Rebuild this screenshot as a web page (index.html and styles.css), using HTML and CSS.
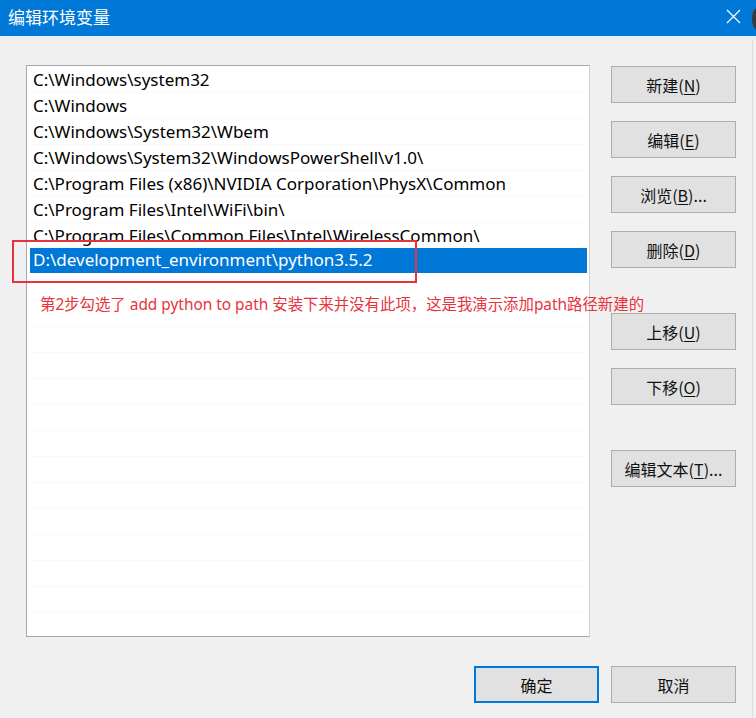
FILE: index.html
```html
<!DOCTYPE html>
<html lang="zh-CN">
<head>
<meta charset="utf-8">
<title>编辑环境变量</title>
<link rel="stylesheet" href="styles.css">
</head>
<body>
<div class="window">
  <div class="titlebar">
    <span class="title">编辑环境变量</span>
    <svg class="close" width="15" height="15" viewBox="0 0 15 15"><path d="M1 1 L14 14 M14 1 L1 14" stroke="#fff" stroke-width="1.2" fill="none"/></svg>
    <span class="edge-dot"></span>
  </div>
  <div class="body">
    <div class="main">
      <div class="list">
        <div class="row">C:\Windows\system32</div>
        <div class="row">C:\Windows</div>
        <div class="row">C:\Windows\System32\Wbem</div>
        <div class="row">C:\Windows\System32\WindowsPowerShell\v1.0\</div>
        <div class="row">C:\Program Files (x86)\NVIDIA Corporation\PhysX\Common</div>
        <div class="row">C:\Program Files\Intel\WiFi\bin\</div>
        <div class="row">C:\Program Files\Common Files\Intel\WirelessCommon\</div>
        <div class="row selected">D:\development_environment\python3.5.2</div>
        <div class="row empty"></div>
        <div class="row empty"></div>
        <div class="row empty"></div>
        <div class="row empty"></div>
        <div class="row empty"></div>
        <div class="row empty"></div>
        <div class="row empty"></div>
        <div class="row empty"></div>
        <div class="row empty"></div>
        <div class="row empty"></div>
        <div class="row empty"></div>
        <div class="row empty"></div>
        <div class="row empty"></div>
        <div class="row empty"></div>
      </div>
      <div class="actions">
        <button class="btn">新建(<u>N</u>)</button>
        <button class="btn">编辑(<u>E</u>)</button>
        <button class="btn">浏览(<u>B</u>)...</button>
        <button class="btn">删除(<u>D</u>)</button>
        <button class="btn group">上移(<u>U</u>)</button>
        <button class="btn">下移(<u>O</u>)</button>
        <button class="btn group">编辑文本(<u>T</u>)...</button>
      </div>
    </div>
    <div class="footer">
      <button class="btn primary">确定</button>
      <button class="btn">取消</button>
    </div>
  </div>
  <div class="annot-box"></div>
  <div class="annot-text">第2步勾选了 add python to path 安装下来并没有此项，这是我演示添加path路径新建的</div>
  <div class="right-edge"></div>
</div>
</body>
</html>
```

FILE: styles.css
```css
* { box-sizing: border-box; }
html, body { margin: 0; padding: 0; }
body {
  width: 756px;
  height: 718px;
  overflow: hidden;
  background: #f0f0f0;
  font-family: "Noto Sans", "Noto Sans CJK SC", sans-serif;
  color: #000;
}
.window {
  position: relative;
  width: 756px;
  height: 718px;
  background: #f0f0f0;
}
.titlebar {
  height: 38px;
  background: #0078d7;
  border-bottom: 2px solid #e6eef8;
  display: flex;
  align-items: center;
  padding-left: 8px;
  position: relative;
}
.title {
  color: #fff;
  font-family: "Noto Sans CJK SC", sans-serif;
  font-size: 17px;
  padding-bottom: 3px;
}
.close {
  margin-left: auto;
  margin-right: 15px;
  margin-bottom: 3px;
}
.edge-dot {
  position: absolute;
  right: -7px;
  top: 8px;
  width: 11px;
  height: 22px;
  border-radius: 50%;
  background: #3a3a3a;
}
.body {
  padding: 27px 20px 0 26px;
}
.main {
  display: flex;
  gap: 21px;
}
.list {
  width: 564px;
  height: 572px;
  background: #fff;
  border: 1px solid #a9a9a9;
  border-right-color: #d0d0d0;
  padding: 1px 2px 0 3px;
  overflow: hidden;
}
.row {
  height: 26px;
  line-height: 26px;
  font-size: 17px;
  padding-left: 3px;
  white-space: nowrap;
  border-bottom: 1px solid #f8f8f8;
}
.row.selected {
  background: #0078d7;
  color: #fff;
  height: 25px;
  line-height: 24px;
  margin-top: -1px;
  margin-bottom: 2px;
  padding-left: 3px;
  border-bottom: none;
}
.actions {
  display: flex;
  flex-direction: column;
  padding-top: 1px;
  gap: 18px;
}
.btn {
  width: 125px;
  height: 37px;
  background: #e1e1e1;
  border: 1px solid #adadad;
  font-family: "Noto Sans CJK SC", sans-serif;
  font-size: 16px;
  color: #111;
  padding: 0;
  margin: 0;
}
.btn u { text-decoration-thickness: 1px; text-underline-offset: 2px; }
.btn.group { margin-top: 27px; }
.footer {
  display: flex;
  justify-content: flex-end;
  gap: 12px;
  margin-top: 29px;
}
.btn.primary {
  border: 2px solid #0078d7;
}
.annot-box {
  position: absolute;
  left: 12px;
  top: 240px;
  width: 405px;
  height: 43px;
  border: 2px solid #e8323c;
}
.annot-text {
  position: absolute;
  left: 40px;
  top: 292px;
  font-size: 15.4px;
  color: #e8323c;
  white-space: nowrap;
  font-family: "Noto Sans", "Noto Sans CJK SC", sans-serif;
}
.right-edge {
  position: absolute;
  right: 3px;
  top: 40px;
  bottom: 0;
  width: 1px;
  background: #dcdcdc;
}
```
